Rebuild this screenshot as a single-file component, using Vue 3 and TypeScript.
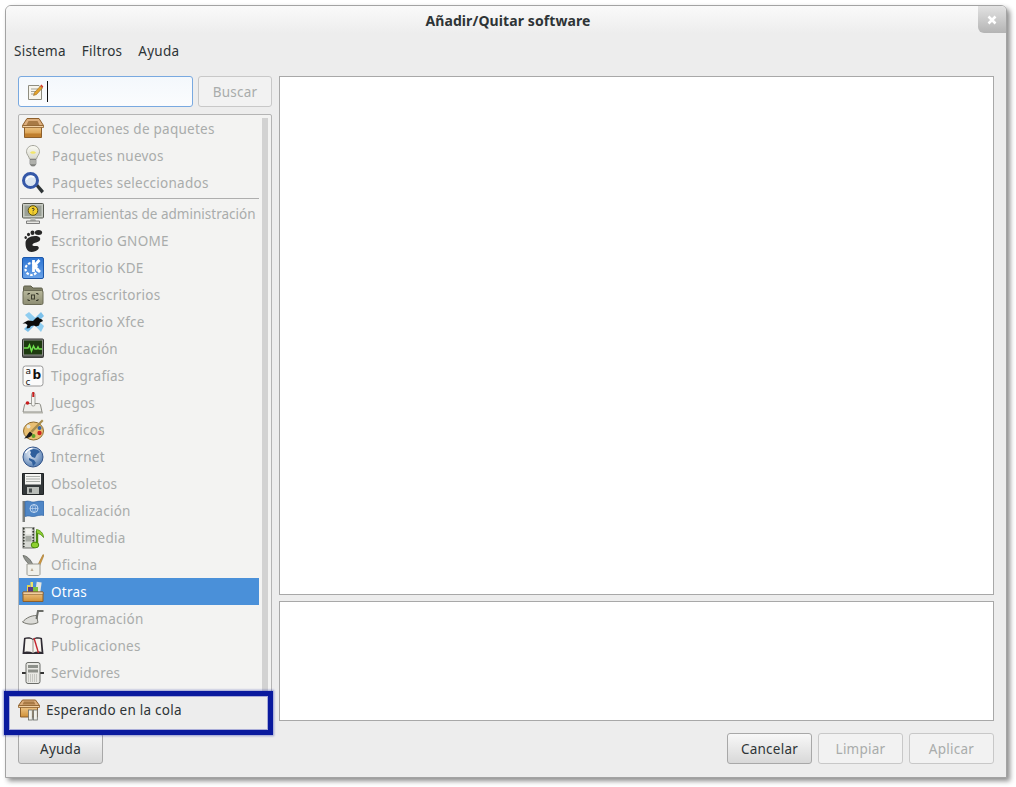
<script setup lang="ts">
interface Row {
  label: string;
  icon: string;
  selected?: boolean;
  narrow?: boolean;
}

const topRows: Row[] = [
  { label: 'Colecciones de paquetes', icon: 'box' },
  { label: 'Paquetes nuevos', icon: 'bulb' },
  { label: 'Paquetes seleccionados', icon: 'search' },
];

// the last row sits behind the callout, only the top of its icon shows
const groupRows: Row[] = [
  { label: 'Herramientas de administración', icon: 'admin', narrow: true },
  { label: 'Escritorio GNOME', icon: 'gnome' },
  { label: 'Escritorio KDE', icon: 'kde' },
  { label: 'Otros escritorios', icon: 'folder' },
  { label: 'Escritorio Xfce', icon: 'xfce' },
  { label: 'Educación', icon: 'monitor' },
  { label: 'Tipografías', icon: 'font' },
  { label: 'Juegos', icon: 'joystick' },
  { label: 'Gráficos', icon: 'palette' },
  { label: 'Internet', icon: 'globe' },
  { label: 'Obsoletos', icon: 'floppy' },
  { label: 'Localización', icon: 'flag' },
  { label: 'Multimedia', icon: 'media' },
  { label: 'Oficina', icon: 'office' },
  { label: 'Otras', icon: 'other', selected: true },
  { label: 'Programación', icon: 'trowel' },
  { label: 'Publicaciones', icon: 'book' },
  { label: 'Servidores', icon: 'server' },
  { label: '', icon: 'gear' },
];
</script>

<template>
  <svg class="sprite" aria-hidden="true">
    <defs>
      <linearGradient id="boxFront" x1="0" y1="0" x2="0" y2="1">
        <stop offset="0" stop-color="#f0c88a" />
        <stop offset="1" stop-color="#cf9038" />
      </linearGradient>
      <linearGradient id="glass" x1="0" y1="0" x2="0" y2="1">
        <stop offset="0" stop-color="#fbfbf4" />
        <stop offset="1" stop-color="#d8d8cc" />
      </linearGradient>
      <linearGradient id="folderFill" x1="0" y1="0" x2="0" y2="1">
        <stop offset="0" stop-color="#b8b89c" />
        <stop offset="1" stop-color="#8c8c72" />
      </linearGradient>
      <linearGradient id="kdeFill" x1="0" y1="0" x2="0" y2="1">
        <stop offset="0" stop-color="#2b73d2" />
        <stop offset="1" stop-color="#6ba3e8" />
      </linearGradient>
      <radialGradient id="globeFill" cx="0.4" cy="0.35" r="0.7">
        <stop offset="0" stop-color="#e8eef6" />
        <stop offset="1" stop-color="#4e78ae" />
      </radialGradient>
    </defs>

    <symbol id="box" viewBox="0 0 22 22">
      <path d="M5 .5h12l4.500 7h-21z" fill="#dcae7c" stroke="#8d5f2b" />
      <path d="M6.500 3h9l2 4h-13z" fill="#a87a45" />
      <path d="M2.500 8h17v11.500h-17z" fill="url(#boxFront)" stroke="#8d5f2b" />
      <path d="M3 15.500h16v3.500h-16z" fill="#c07f2e" />
      <path d="M.5 7.500h21v2h-21z" fill="#f0cfa2" stroke="#8d5f2b" stroke-width=".8" />
    </symbol>

    <symbol id="bulb" viewBox="0 0 22 22">
      <path d="M11 .5c-4 0-6.500 3-6.500 6.200 0 3 2.500 4.300 3 7.300h7c.5-3 3-4.300 3-7.300 0-3.200-2.500-6.200-6.500-6.200z" fill="url(#glass)" stroke="#a4a49a" />
      <path d="M8 7.500c2-1.800 4-1.800 6 0-1 1.800-5 1.800-6 0z" fill="#f2e66a" />
      <path d="M8 14.500h6v4.500l-1.500 2h-3l-1.500-2z" fill="#8b8d88" stroke="#666" stroke-width=".6" />
      <path d="M8 16h6M8 18h6" stroke="#d4d4d0" />
    </symbol>

    <symbol id="search" viewBox="0 0 22 22">
      <path d="M13.500 14l2.500-2 6 7-2.500 2.500z" fill="#2e3436" />
      <circle cx="8.500" cy="8.500" r="7" fill="#dbe6f2" stroke="#3558a8" stroke-width="3" />
      <path d="M4.500 8a5 4 0 0 1 7.500-3" fill="none" stroke="#fff" stroke-width="1.500" />
    </symbol>

    <symbol id="admin" viewBox="0 0 22 22">
      <rect x=".5" y=".5" width="21" height="14.500" rx="1" fill="#c7cbc3" stroke="#55584f" />
      <rect x="2.500" y="2.500" width="17" height="10.500" fill="#9aa096" />
      <circle cx="11" cy="7.500" r="4.800" fill="#f2cf2e" stroke="#5a5110" />
      <path d="M10 6c.5-1.300 2.500-.8 2 .5-.3.8-1 .8-1 1.700M11 9.700v.6" fill="none" stroke="#222" stroke-width="1" />
      <path d="M9 15h4l1 3h-6z" fill="#b8bbb5" />
      <path d="M4.500 18h13v2.500h-13z" fill="#e6e6e2" stroke="#666" stroke-width=".8" />
    </symbol>

    <symbol id="gnome" viewBox="0 0 22 22">
      <path d="M3.500 13c0-4 4-7 9.500-7 4 0 6 2 5 4-1 3-6.500 2-7.500 4.500-.5 1.500 1.500 1.500 3.500 1.500 3 0 3.500 2 2 3.500s-4 2.500-6.500 2.500c-3.500 0-6-3-6-8.500z" fill="#262626" />
      <ellipse cx="16.500" cy="2.600" rx="3.600" ry="2.500" fill="#262626" />
      <ellipse cx="10.500" cy="2.800" rx="2" ry="2.300" fill="#262626" />
      <ellipse cx="6.500" cy="4.500" rx="1.500" ry="1.800" fill="#262626" />
      <ellipse cx="3.700" cy="7.500" rx="1.200" ry="1.500" fill="#262626" />
    </symbol>

    <symbol id="kde" viewBox="0 0 22 22">
      <rect x=".5" y=".5" width="21" height="21" rx="1.500" fill="url(#kdeFill)" stroke="#1d58ab" />
      <circle cx="9.500" cy="12" r="6" fill="none" stroke="#fff" stroke-width="2.200" stroke-dasharray="2.500 1.500" />
      <path d="M11.500 3v12M17.500 3l-5.500 6 6 6" fill="none" stroke="#fff" stroke-width="2.800" />
    </symbol>

    <symbol id="folder" viewBox="0 0 22 22">
      <path d="M1.500 3.500c0-1 .5-1.500 1.500-1.500h6l2 2h8c1 0 1.500.5 1.500 1.500v3h-19z" fill="#7f8068" stroke="#5e5f4b" />
      <rect x="1" y="6.500" width="20" height="14" rx="1.500" fill="url(#folderFill)" stroke="#6a6a55" />
      <path d="M6 11v-1.500h2M16 11v-1.500h-2M6 15v1.500h2M16 15v1.500h-2" fill="none" stroke="#3e3e30" />
      <rect x="9.500" y="11" width="3" height="4" fill="none" stroke="#3e3e30" />
    </symbol>

    <symbol id="xfce" viewBox="0 0 22 22">
      <path d="M3 4l4-3 15 14-3 6z" fill="#8fcdf0" />
      <path d="M19 1l3 4-16 16-4-3z" fill="#7cc0ea" />
      <path d="M.5 12.500l3.500-2 2-1 5 .5 3-3 2-1 1.500 1.500 2.500 1 1 1.500-3 1.500-1 3-3 1-2-1-3 .5-1.500 2-3 .5 1-3.500-2-1.500z" fill="#0a0a0a" />
    </symbol>

    <symbol id="monitor" viewBox="0 0 22 22">
      <rect x=".5" y="1" width="21" height="18.500" rx="1" fill="#8b8d88" stroke="#333" />
      <rect x="2" y="2.500" width="18" height="14" fill="#1d3a10" />
      <path d="M2 10h4l1.500-3 2 6 2-5 1.500 3h2l1-2 1 2h3" fill="none" stroke="#6fe04c" stroke-width="1.500" />
      <rect x="1" y="17.500" width="20" height="2" fill="#4f514d" />
    </symbol>

    <symbol id="joystick" viewBox="0 0 22 22">
      <path d="M1 20l1.500-7c.3-1 1-1.500 2-1.500h12c1 0 1.700.5 2 1.500l1.500 7z" fill="#eeeeea" stroke="#8d8d86" />
      <rect x="9.500" y="1" width="3.500" height="13" rx="1.500" fill="#f4f4f0" stroke="#8d8d86" stroke-width=".8" />
      <rect x="10.300" y="0" width="2" height="5" fill="#c81e1e" />
      <circle cx="5.500" cy="11" r="1.800" fill="#c81e1e" />
      <path d="M1 20h20v1.500h-20z" fill="#b4b4ac" />
    </symbol>

    <symbol id="palette" viewBox="0 0 22 22">
      <ellipse cx="11.500" cy="12" rx="10" ry="9" fill="#e9bf72" stroke="#8d6a2c" />
      <circle cx="6.500" cy="7.500" r="1.900" fill="#e8e8e0" />
      <circle cx="17.500" cy="9" r="2" fill="#3465a4" />
      <circle cx="17.500" cy="14" r="2.200" fill="#cc2222" />
      <circle cx="11.500" cy="17" r="2" fill="#5da32a" />
      <path d="M20 .5l1.500 1.500-11 11.500-2-1.500z" fill="#a88d4c" />
      <path d="M8 12.500l2.500 2c-.5 3-3.500 4.500-8.500 5 2.500-1.500 3.500-5 6-7z" fill="#1c1c1c" />
    </symbol>

    <symbol id="globe" viewBox="0 0 22 22">
      <circle cx="11" cy="11" r="10" fill="url(#globeFill)" stroke="#34558a" />
      <path d="M8 4c3-2 8-1 10 2l-3 2-2 4-3-1-2-3 1-1zM7 12l5 2 2 3-3 3-1-4-3-2z" fill="#2f5f9c" />
      <path d="M3.500 7c2-3 5-4.500 7-4.500" fill="none" stroke="#fff" stroke-width="1.400" />
    </symbol>

    <symbol id="floppy" viewBox="0 0 22 22">
      <path d="M.5.500h21v21h-21z" fill="#33383a" stroke="#1f2224" />
      <rect x="3" y="1" width="16" height="10.500" fill="#f4f4f2" />
      <path d="M4 3.500h14M4 6h14M4 8.500h14" stroke="#a8aca8" />
      <rect x="5" y="14" width="12" height="7" fill="#b9bdb9" />
      <rect x="7" y="15.500" width="3" height="4" fill="#4a4f50" />
    </symbol>

    <symbol id="flag" viewBox="0 0 22 22">
      <rect x=".5" y="1" width="2.500" height="21" fill="#7c7f7c" />
      <path d="M3 1.500c4-1.500 6 1 9 .5s6-1.500 10-.5v14c-4-1-7 .5-10 1s-5-1.500-9 0z" fill="#4f86c6" stroke="#2f5f9c" stroke-width=".6" />
      <circle cx="12" cy="8.500" r="4" fill="none" stroke="#c4d8f0" />
      <path d="M8 8.500h8M12 4.500c-2 2.500-2 5.500 0 8M12 4.500c2 2.500 2 5.500 0 8" fill="none" stroke="#c4d8f0" stroke-width=".7" />
    </symbol>

    <symbol id="media" viewBox="0 0 22 22">
      <rect x="1" y="0" width="11" height="21" fill="#d7d9d4" stroke="#4e514d" stroke-width=".8" />
      <path d="M1.800 1v19M11.200 1v19" stroke="#33362f" stroke-width="1.600" stroke-dasharray="1.500 1.500" />
      <rect x="3.500" y="2" width="6" height="5.500" fill="#f3f3ef" />
      <rect x="3.500" y="9" width="6" height="5.500" fill="#a7aba4" />
      <path d="M15 4v13" stroke="#4a8a0e" stroke-width="2.400" />
      <path d="M14.500 2.500c3.500.5 7 3.500 7 8-1.500-2.500-3.500-3.500-7-4.500z" fill="#8ed030" stroke="#4a8a0e" stroke-width=".8" />
      <ellipse cx="13" cy="18" rx="3.800" ry="2.900" fill="#8ed030" stroke="#4a8a0e" />
    </symbol>

    <symbol id="office" viewBox="0 0 22 22">
      <path d="M1 1.500c3.500 0 8 4 10 9.500l-2 1C5.500 9 2.500 6 1 1.500z" fill="#8f928d" stroke="#55584f" stroke-width=".7" />
      <path d="M21 .5l-6 12 2 .8 5-12z" fill="#d79a3a" stroke="#8d6a2c" stroke-width=".5" />
      <path d="M5 10h13v10c0 1-1 1.500-2 1.500h-9c-1 0-2-.5-2-1.500z" fill="#f0f0ea" stroke="#9a9a92" />
      <path d="M10 14l1.500 3h-3z" fill="#b8a890" />
    </symbol>

    <symbol id="other" viewBox="0 0 22 22">
      <rect x="5" y="4" width="3" height="8" fill="#e4d24e" />
      <rect x="8.500" y="1" width="2.500" height="11" fill="#f0e26a" />
      <rect x="6" y="6" width="5" height="6" fill="#5c3a86" />
      <rect x="14" y="1" width="5" height="11" fill="#e6e6e0" transform="rotate(8 16 6)" />
      <rect x="11" y="6" width="5" height="6" fill="#7ac143" />
      <path d="M1 11h20v9.500h-20z" fill="url(#boxFront)" stroke="#8d5f2b" />
      <path d="M1 11h20v2.500h-20z" fill="#f0cfa2" stroke="#8d5f2b" stroke-width=".6" />
    </symbol>

    <symbol id="trowel" viewBox="0 0 22 22">
      <path d="M.5 14c4-4.500 9-6.500 14-6.500l1.500 7c-5 2.500-11 2-15.500-.5z" fill="#dcdcd8" stroke="#77776f" />
      <path d="M14.500 11l1.500-8h5.500" fill="none" stroke="#6b6d68" stroke-width="2" />
    </symbol>

    <symbol id="book" viewBox="0 0 22 22">
      <path d="M.5 19l1.500-16c3-1 7-1 9 1 2-2 6-2 9-1l1.500 16z" fill="#2f2b33" />
      <path d="M2.500 17l1-13c3-.7 6-.3 7.500 1 1.500-1.300 4.500-1.700 7.500-1l1 13c-3-.8-6-.5-8.500.8-2.500-1.300-5.500-1.600-8.500-.8z" fill="#f6f4ef" />
      <path d="M11 5v13" stroke="#99958c" />
      <path d="M12 3l4.500 15" stroke="#c4242c" stroke-width="1.400" />
    </symbol>

    <symbol id="server" viewBox="0 0 22 22">
      <path d="M0 11h4M18 11h4" stroke="#333" stroke-width="1.800" />
      <rect x="4" y=".5" width="14" height="21" rx="2" fill="#e8e8e4" stroke="#6a6c68" />
      <rect x="6" y="3" width="10" height="3" fill="#8d908a" />
      <rect x="6" y="7.500" width="10" height="3" fill="#8d908a" />
      <path d="M6 13h10M6 15h10M6 17h10M6 19h10" stroke="#a4a6a0" stroke-dasharray="1 1" />
    </symbol>

    <symbol id="gear" viewBox="0 0 22 22">
      <circle cx="11" cy="11" r="6" fill="#c4c6c1" stroke="#77797a" stroke-width="2" stroke-dasharray="2 1.500" />
    </symbol>

    <symbol id="pencil" viewBox="0 0 16 16">
      <path d="M.5 1.500h10.500l2.500 2.500v11.500h-13z" fill="#f8f6ee" stroke="#8f8d80" />
      <path d="M3 5h7M3 7.500h6M3 10h4" stroke="#a5a397" />
      <path d="M5.500 11.500l1 -3 6-6.500 2 2-6 6.500z" fill="#e2a22c" stroke="#8a5c14" stroke-width=".5" />
      <path d="M12.300 1.500l1-1 2 2-1 1.500z" fill="#d43a2a" />
    </symbol>

    <symbol id="queue" viewBox="0 0 22 22">
      <path d="M4.500 1h13l4 5.500h-21z" fill="#dcae7c" stroke="#8d5f2b" />
      <path d="M6 2.500h10l1.500 3h-13z" fill="#a87a45" />
      <path d="M2.500 7.500h17v10.500h-17z" fill="url(#boxFront)" stroke="#8d5f2b" />
      <path d="M.5 6.500h21v2h-21z" fill="#f0cfa2" stroke="#8d5f2b" stroke-width=".8" />
      <rect x="10.500" y="11" width="3.800" height="10" fill="#f0f0ea" stroke="#6a6c68" stroke-width=".8" />
      <rect x="15.500" y="11" width="3.800" height="10" fill="#f0f0ea" stroke="#6a6c68" stroke-width=".8" />
    </symbol>
  </svg>

  <div class="page">
    <div class="window">
      <header class="titlebar">
        <span class="title">Añadir/Quitar software</span>
        <span class="close" aria-label="Cerrar">
          <svg width="10" height="10" viewBox="0 0 10 10">
            <path d="M1.500 1.500l7 7M8.500 1.500l-7 7" stroke="#fff" stroke-width="2.600" />
          </svg>
        </span>
      </header>

      <nav class="menubar">
        <span>Sistema</span>
        <span>Filtros</span>
        <span>Ayuda</span>
      </nav>

      <div class="body">
        <aside class="side">
          <div class="search-row">
            <div class="entry">
              <svg class="entry-icon"><use href="#pencil" /></svg>
              <span class="caret"></span>
            </div>
            <button class="btn find" disabled>Buscar</button>
          </div>

          <div class="list">
            <div class="rows">
              <div v-for="row in topRows" :key="row.label" class="row top">
                <svg class="icon"><use :href="'#' + row.icon" /></svg>
                <span>{{ row.label }}</span>
              </div>
              <div class="sep"></div>
              <div
                v-for="row in groupRows"
                :key="row.icon"
                class="row"
                :class="{ selected: row.selected, narrow: row.narrow }"
              >
                <svg v-if="row.icon === 'font'" class="icon" viewBox="0 0 22 22">
                  <rect x="1" y="1" width="20" height="20" rx="2.500" fill="#fbfbfb" stroke="#9a9a9a" />
                  <text x="3.500" y="9" class="glyph">a</text>
                  <text x="10.500" y="14" class="glyph glyph-bold">b</text>
                  <text x="3.500" y="19.500" class="glyph">c</text>
                </svg>
                <svg v-else class="icon"><use :href="'#' + row.icon" /></svg>
                <span v-if="row.label">{{ row.label }}</span>
              </div>
            </div>
            <div class="scrollbar"></div>
          </div>

          <div class="side-foot">
            <button class="btn help">Ayuda</button>
          </div>
        </aside>

        <main class="main">
          <div class="pane big"></div>
          <div class="pane small"></div>
          <div class="actions">
            <button class="btn action">Cancelar</button>
            <button class="btn action" disabled>Limpiar</button>
            <button class="btn action" disabled>Aplicar</button>
          </div>
        </main>
      </div>
    </div>

    <div class="callout">
      <svg class="icon"><use href="#queue" /></svg>
      <span>Esperando en la cola</span>
    </div>
  </div>
</template>

<style scoped>
.sprite {
  position: absolute;
  width: 0;
  height: 0;
  overflow: hidden;
}

.page {
  position: relative;
  width: 1016px;
  height: 787px;
  padding: 5px 0 0 5px;
  box-sizing: border-box;
  background: #fff;
  overflow: hidden;
  font-family: "Noto Sans", sans-serif;
  font-size: 13.5px;
  letter-spacing: 0.25px;
  color: #2e3436;
}

.window {
  width: 1002px;
  height: 773px;
  box-sizing: border-box;
  display: flex;
  flex-direction: column;
  background: #ededed;
  border: 1px solid #a3a3a3;
  border-radius: 6px 6px 0 0;
  box-shadow: 3px 3px 5px rgba(0, 0, 0, 0.45);
}

.titlebar {
  position: relative;
  height: 27px;
  flex: none;
  display: flex;
  align-items: center;
  justify-content: center;
  padding: 2px 0 0 4px;
  box-sizing: border-box;
  border-radius: 5px 5px 0 0;
  background: linear-gradient(#fafafa, #ededed);
}

.title {
  font-weight: 700;
  font-size: 14px;
  letter-spacing: 0.1px;
}

.close {
  position: absolute;
  top: 0;
  right: 0;
  width: 28px;
  height: 27px;
  display: flex;
  align-items: center;
  justify-content: center;
  border-radius: 0 5px 0 6px;
  background: linear-gradient(#e2e2e2, #b4b4b4);
}

.menubar {
  flex: none;
  display: flex;
  gap: 16px;
  height: 38px;
  padding: 9px 0 0 8px;
  box-sizing: border-box;
}

.body {
  flex: 1;
  min-height: 0;
  display: flex;
  gap: 7px;
  padding: 5px 12px 13px;
}

.side {
  width: 254px;
  flex: none;
  display: flex;
  flex-direction: column;
  gap: 7px;
}

.search-row {
  flex: none;
  display: flex;
  gap: 5px;
  height: 31px;
}

.entry {
  width: 175px;
  box-sizing: border-box;
  display: flex;
  align-items: center;
  gap: 3px;
  padding-left: 9px;
  border: 1px solid #79a9e0;
  border-radius: 3px;
  background: linear-gradient(#f4f8fc, #fbfcfe);
}

.entry-icon {
  width: 16px;
  height: 16px;
}

.caret {
  width: 1px;
  height: 21px;
  background: #111;
}

.btn {
  box-sizing: border-box;
  height: 31px;
  padding: 0;
  border: 1px solid #a8a8a8;
  border-radius: 3px;
  background: linear-gradient(#f8f8f8, #d8d8d8);
  font: inherit;
  letter-spacing: inherit;
  color: #2e3436;
}

.btn:disabled {
  border-color: #c8c8c8;
  background: #f2f2f2;
  color: #a9acab;
}

.find {
  flex: 1;
}

.list {
  flex: 1;
  min-height: 0;
  position: relative;
  display: flex;
  overflow: hidden;
  padding-right: 3px;
  background: #f3f3f2;
  border: 1px solid #b4b4b4;
  border-radius: 2px 2px 0 0;
}

.rows {
  width: 240px;
  flex: none;
}

.row {
  height: 27px;
  display: flex;
  align-items: center;
  gap: 7px;
  padding-left: 3px;
  color: #a9acab;
  white-space: nowrap;
}

.row.top {
  gap: 8px;
}

.row.narrow {
  letter-spacing: 0;
}

.row.selected {
  background: #4a90d9;
  color: #fff;
}

.icon {
  width: 22px;
  height: 22px;
  flex: none;
}

.glyph {
  font-family: "DejaVu Sans", sans-serif;
  font-size: 9px;
  letter-spacing: 0;
  fill: #111;
}

.glyph-bold {
  font-weight: 700;
  font-size: 12px;
}

.sep {
  height: 1px;
  margin: 2px 0 1px 1px;
  background: #aeaeae;
}

.scrollbar {
  width: 8px;
  margin: 3px 0 0 3px;
  background: #d2d2d2;
}

.side-foot {
  flex: none;
  display: flex;
}

.help {
  width: 85px;
}

.main {
  flex: 1;
  min-width: 0;
  display: flex;
  flex-direction: column;
}

.pane {
  box-sizing: border-box;
  background: #fff;
  border: 1px solid #a8a8a8;
}

.big {
  height: 519px;
}

.small {
  height: 120px;
  margin-top: 6px;
}

.actions {
  display: flex;
  justify-content: flex-end;
  gap: 6px;
  margin-top: 12px;
}

.action {
  width: 85px;
}

.callout {
  position: absolute;
  left: 9px;
  top: 696px;
  width: 259px;
  height: 34px;
  box-sizing: border-box;
  display: flex;
  align-items: center;
  gap: 6px;
  padding: 0 0 6px 8px;
  background: #ededed;
  border: 1px solid #a9acd8;
  outline: 5px solid #0a1a9e;
  box-shadow: 0 0 2px 6px rgba(10, 26, 158, 0.4);
}
</style>

<style>
html,
body {
  background: #fff;
}
</style>
